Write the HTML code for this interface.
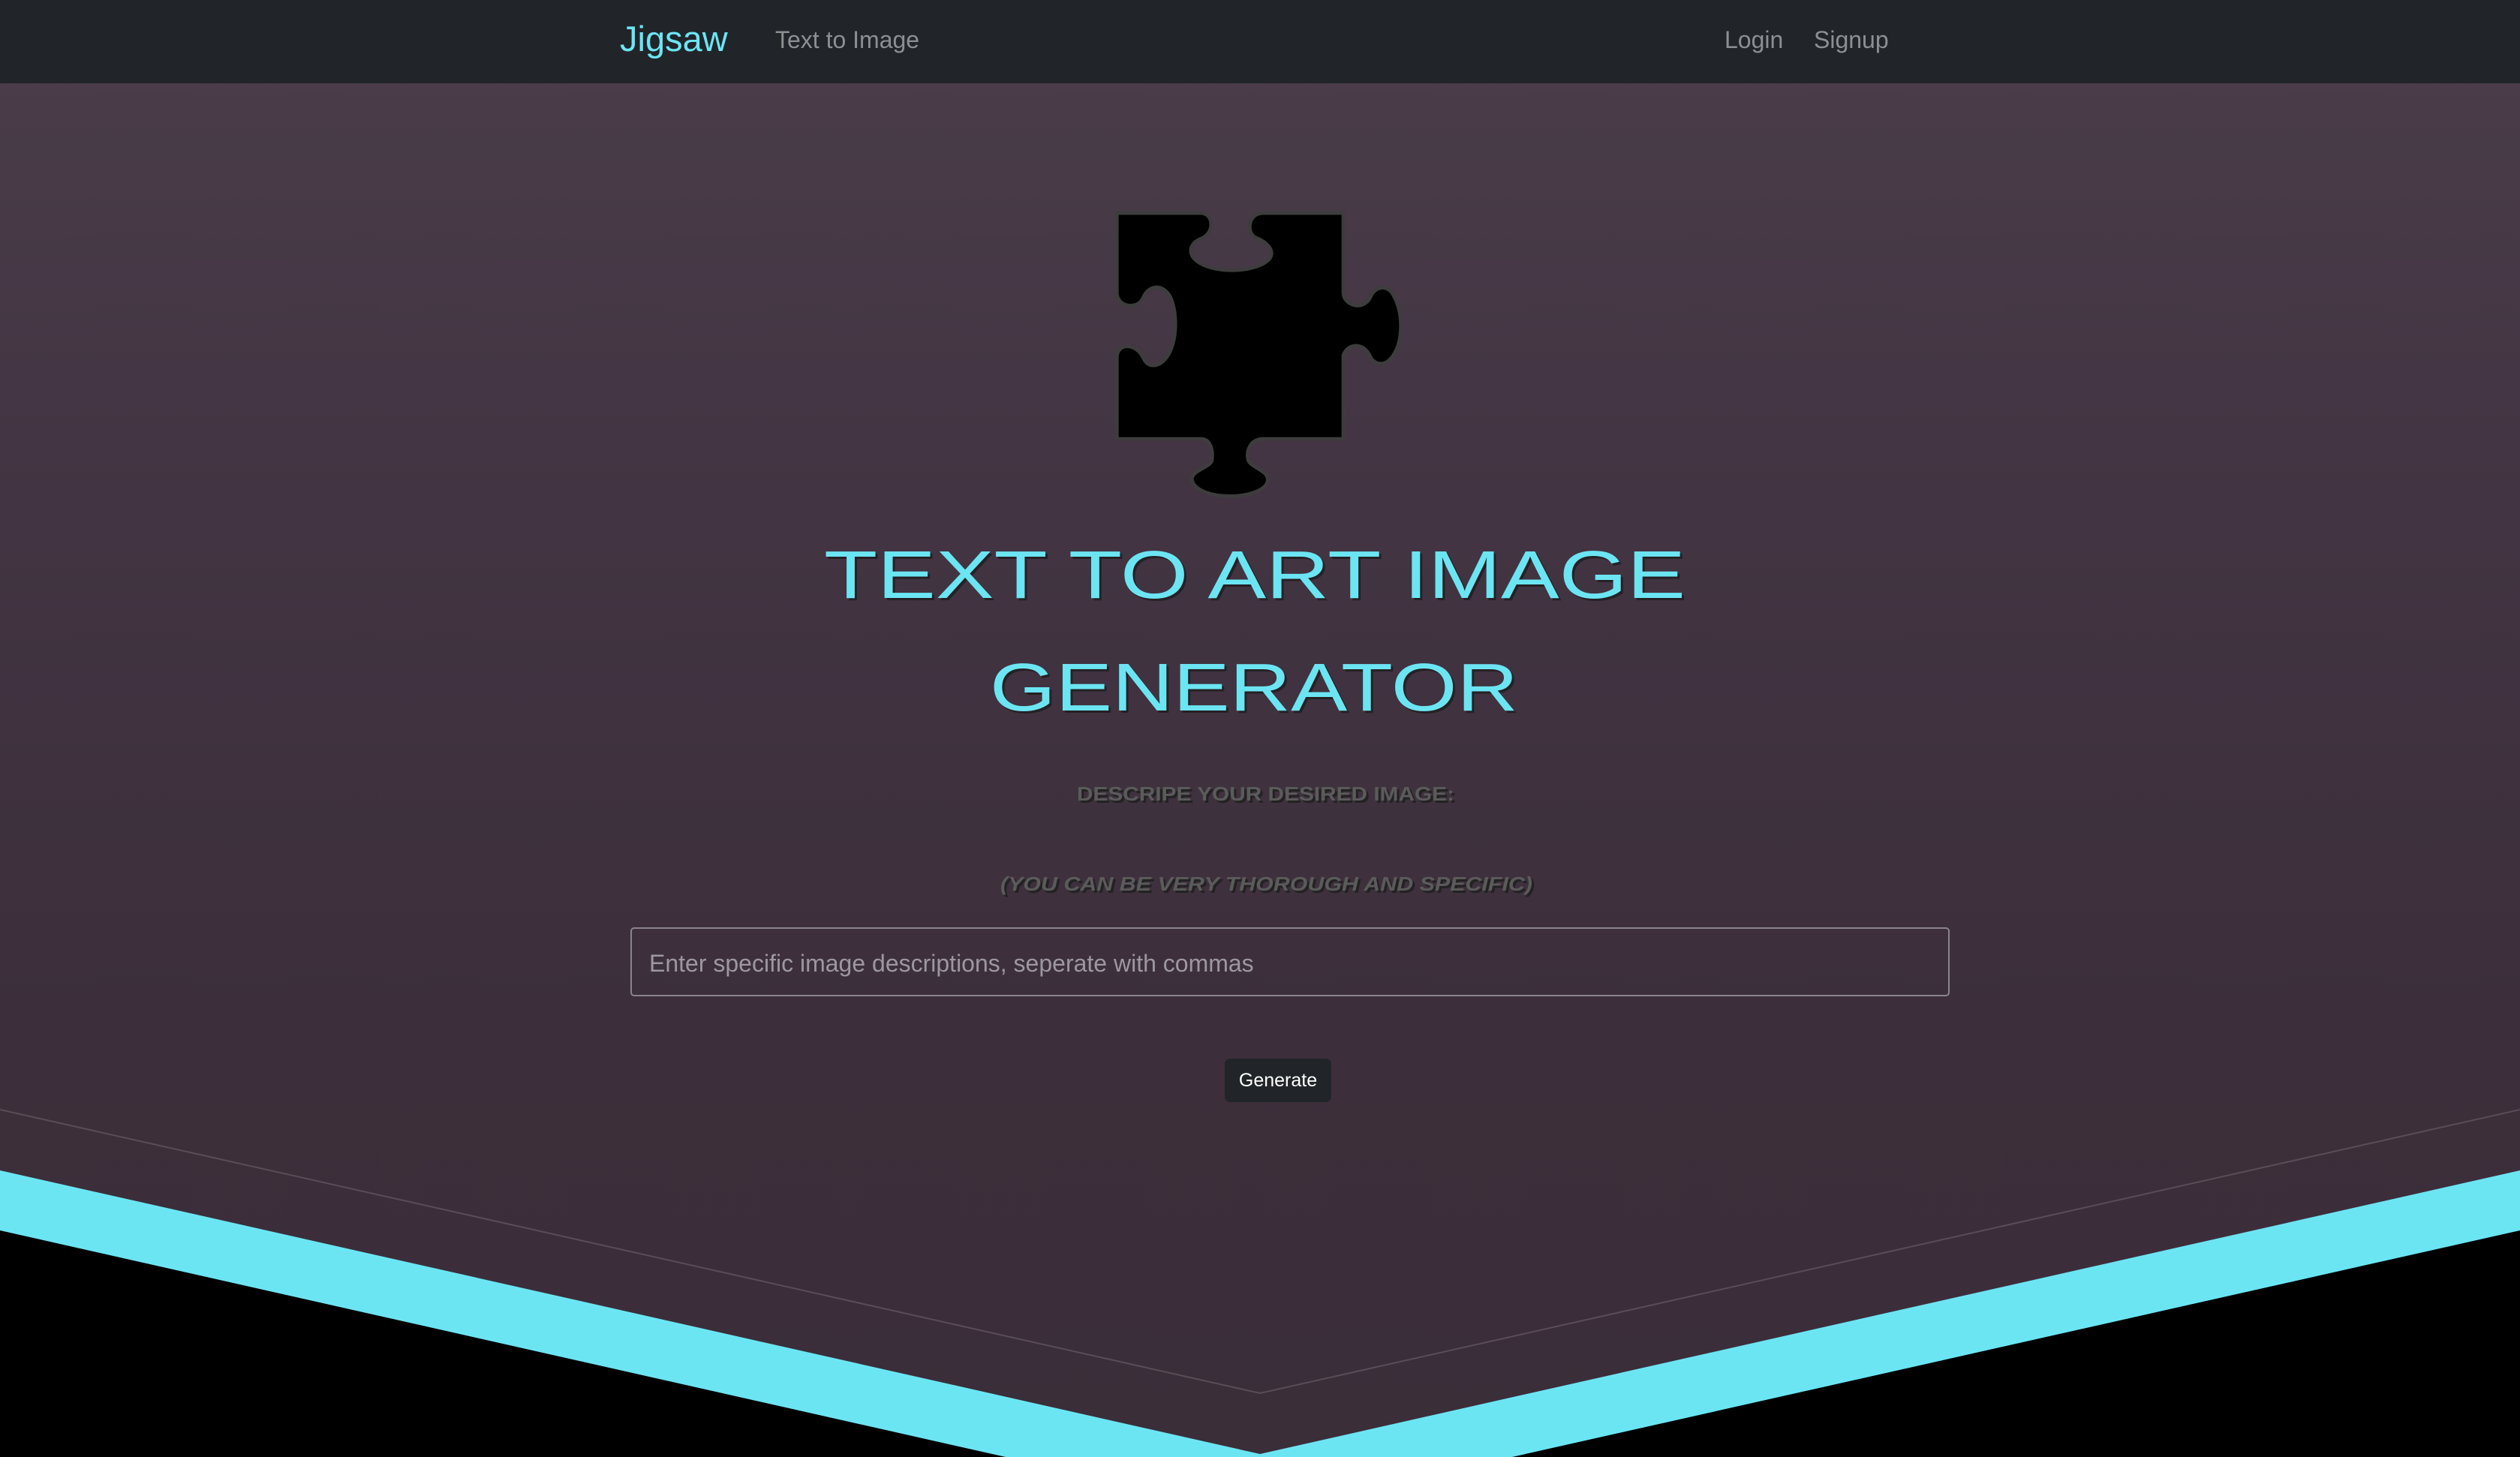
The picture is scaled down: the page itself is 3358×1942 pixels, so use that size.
<!DOCTYPE html>
<html><head><meta charset="utf-8"><style>
html,body{margin:0;padding:0;width:3358px;height:1942px;overflow:hidden;}
body{background:linear-gradient(180deg,#4b3e4a 0%,#433543 30%,#3c2f3b 70%,#3a2e39 100%);font-family:"Liberation Sans",sans-serif;position:relative;}
nav{position:absolute;left:0;top:0;width:3358px;height:111px;background:#212529;}
.brand{position:absolute;left:826px;top:24px;font-size:47px;color:#6ce5f3;}
.lnk{position:absolute;top:35px;font-size:32px;color:#8d8f92;}
svg{position:absolute;}
.inp{position:absolute;left:840px;top:1236px;width:1758px;height:92px;border:2px solid #8a8490;border-radius:5px;box-sizing:border-box;}
.ph{position:absolute;left:865px;top:1266px;font-size:32px;color:#9c97a0;}
.btn{position:absolute;left:1632px;top:1411px;width:142px;height:58px;background:#212529;border-radius:7px;color:#fff;font-size:25px;text-align:center;line-height:58px;}
</style></head><body>
<nav>
<div class="brand">Jigsaw</div>
<div class="lnk" style="left:1033px">Text to Image</div>
<div class="lnk" style="left:2298px">Login</div>
<div class="lnk" style="left:2417px">Signup</div>
</nav>
<svg style="left:1400px;top:240px" width="500" height="440" viewBox="0 0 1500 1320">
<path d="M265,132 L600,132 C650,132 660,210 600,235 C560,250 545,290 580,320 C640,375 820,375 875,315 C900,280 860,245 820,230 C780,210 790,132 850,132 L1170,132 L1170,450 C1170,500 1250,530 1280,465 C1300,420 1350,420 1370,460 C1410,530 1410,640 1370,700 C1340,750 1290,740 1275,700 C1250,650 1190,650 1170,700 L1170,1035 L850,1035 C800,1035 780,1080 790,1120 C800,1150 870,1160 868,1200 C860,1280 590,1290 565,1200 C560,1160 640,1150 645,1120 C650,1080 640,1035 600,1035 L265,1035 L265,710 C265,650 340,650 370,710 C390,760 450,750 480,680 C505,620 505,530 480,470 C450,410 390,420 370,470 C350,520 265,510 265,450 Z" fill="#000" stroke="#3d3d3d" stroke-width="14"/>
</svg>
<svg style="left:0;top:0" width="3358" height="1942">
<g font-family="Liberation Sans, sans-serif" fill="#6ce5f3" font-size="90">
<text x="1101" y="800" textLength="1148" lengthAdjust="spacingAndGlyphs" fill="#1a1a1a" opacity=".7">TEXT TO ART IMAGE</text>
<text x="1098" y="797" textLength="1148" lengthAdjust="spacingAndGlyphs">TEXT TO ART IMAGE</text>
<text x="1322" y="950" textLength="704" lengthAdjust="spacingAndGlyphs" fill="#1a1a1a" opacity=".7">GENERATOR</text>
<text x="1319" y="947" textLength="704" lengthAdjust="spacingAndGlyphs">GENERATOR</text>
</g>
<g font-family="Liberation Sans Narrow, Liberation Sans, sans-serif" font-weight="bold" font-size="26">
<text x="1438" y="1070" textLength="503" lengthAdjust="spacingAndGlyphs" fill="#222">DESCRIPE YOUR DESIRED IMAGE:</text>
<text x="1435" y="1067" textLength="503" lengthAdjust="spacingAndGlyphs" fill="#5b5b5b">DESCRIPE YOUR DESIRED IMAGE:</text>
<text x="1336" y="1190" textLength="709" lengthAdjust="spacingAndGlyphs" fill="#222" font-style="italic">(YOU CAN BE VERY THOROUGH AND SPECIFIC)</text>
<text x="1333" y="1187" textLength="709" lengthAdjust="spacingAndGlyphs" fill="#5b5b5b" font-style="italic">(YOU CAN BE VERY THOROUGH AND SPECIFIC)</text>
</g>
<polyline points="0,1479 1679,1857 3358,1479" fill="none" stroke="#5a4d58" stroke-width="2"/>
<polygon points="0,1560 1679,1938 3358,1560 3358,1942 0,1942" fill="#6ce5f3"/>
<polygon points="0,1640 1340,1942 0,1942" fill="#000"/>
<polygon points="3358,1640 2015,1942 3358,1942" fill="#000"/>
</svg>
<div class="inp"></div>
<div class="ph">Enter specific image descriptions, seperate with commas</div>
<div class="btn">Generate</div>
</body></html>
